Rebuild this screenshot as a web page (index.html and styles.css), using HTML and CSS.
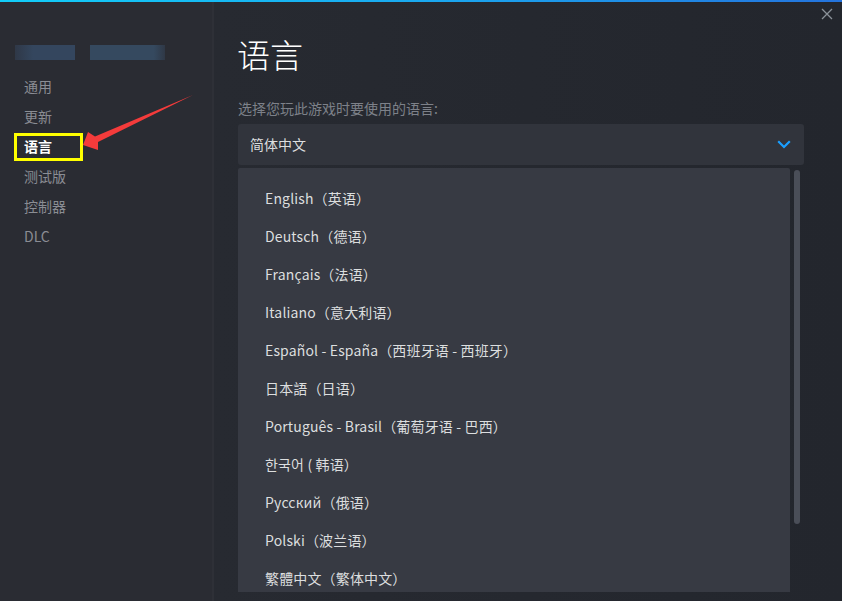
FILE: index.html
```html
<!DOCTYPE html>
<html lang="zh-CN">
<head>
<meta charset="utf-8">
<title>语言</title>
<link rel="stylesheet" href="styles.css">
</head>
<body>
<div class="topline"></div>
<div class="app">
  <aside class="sidebar">
    <div class="blurred">
      <span class="blur-a"></span>
      <span class="blur-b"></span>
    </div>
    <nav class="nav">
      <div class="nav-item">通用</div>
      <div class="nav-item">更新</div>
      <div class="nav-item active">语言</div>
      <div class="nav-item">测试版</div>
      <div class="nav-item">控制器</div>
      <div class="nav-item">DLC</div>
    </nav>
  </aside>
  <main class="main">
    <h1 class="title">语言</h1>
    <p class="subtitle">选择您玩此游戏时要使用的语言:</p>
    <div class="select">
      <span class="select-value">简体中文</span>
      <svg class="chevron" width="14" height="9" viewBox="0 0 14 9"><path d="M1.2 1.2 L7 7 L12.8 1.2" fill="none" stroke="#1a9fff" stroke-width="2.2"/></svg>
    </div>
    <div class="dropdown">
      <ul class="options">
        <li>English（英语）</li>
        <li>Deutsch（德语）</li>
        <li>Français（法语）</li>
        <li>Italiano（意大利语）</li>
        <li>Español - España（西班牙语 - 西班牙）</li>
        <li>日本語（日语）</li>
        <li>Português - Brasil（葡萄牙语 - 巴西）</li>
        <li>한국어 ( 韩语）</li>
        <li>Русский（俄语）</li>
        <li>Polski（波兰语）</li>
        <li>繁體中文（繁体中文）</li>
      </ul>
      <div class="scrollbar"></div>
    </div>
    <svg class="close" width="12" height="12" viewBox="0 0 12 12"><path d="M1 1 L11 11 M11 1 L1 11" stroke="#8b9299" stroke-width="1.3"/></svg>
  </main>
  <div class="highlight"></div>
  <svg class="arrow" width="842" height="601" viewBox="0 0 842 601">
    <polygon points="83,145 88,132 95,136.5 193,95 98,142 98,150" fill="#f43b3b"/>
  </svg>
</div>
</body>
</html>
```
FILE: styles.css
```css
html, body {
  margin: 0;
  padding: 0;
  background: #25282f;
  width: 842px;
  height: 601px;
  overflow: hidden;
  font-family: "Noto Sans CJK SC", "Noto Sans", sans-serif;
}
.topline {
  height: 2px;
  background: linear-gradient(90deg, #12cdf8 0%, #1aa9f0 50%, #2473dd 100%);
}
.app {
  position: relative;
  display: flex;
  height: 599px;
}
.sidebar {
  width: 212px;
  flex: none;
  background: #2a2c33;
  border-right: 2px solid #2e3037;
}
.blurred {
  display: flex;
  gap: 15px;
  margin: 43px 0 0 15px;
  height: 15px;
  filter: blur(0.6px);
}
.blur-a {
  width: 60px;
  background: linear-gradient(90deg, #2f3847 0%, #34465e 30%, #34465e 100%);
}
.blur-b {
  width: 75px;
  background: linear-gradient(90deg, #35495f 0%, #35495f 85%, #2f3846 100%);
}
.nav {
  margin-top: 11px;
}
.nav-item {
  height: 30px;
  line-height: 30px;
  padding-left: 24px;
  font-size: 14px;
  color: #8a8d94;
}
.nav-item.active {
  color: #ffffff;
  font-weight: 700;
}
.main {
  position: relative;
  flex: 1;
  padding: 0 38px 0 24px;
  background: linear-gradient(90deg, #272a31 0%, #23262d 100%);
}
.title {
  margin: 32px 0 0 -1px;
  font-size: 33px;
  line-height: 40px;
  font-weight: 300;
  color: #ffffff;
}
.subtitle {
  margin: 24px 0 0;
  font-size: 14px;
  line-height: 20px;
  color: #7d8189;
}
.select {
  margin-top: 6px;
  height: 41px;
  background: #31343c;
  border-radius: 3px;
  display: flex;
  align-items: center;
  justify-content: space-between;
  padding: 0 13px 2px 12px;
  box-sizing: border-box;
}
.select-value {
  font-size: 14px;
  color: #dcdedf;
}
.chevron {
  display: block;
  margin-top: 2px;
}
.dropdown {
  margin-top: 3px;
  display: flex;
  gap: 4px;
  align-items: flex-start;
}
.options {
  list-style: none;
  margin: 0;
  padding: 11px 0 0 27px;
  width: 525px;
  height: 413px;
  overflow: hidden;
  background: #373a43;
  border-radius: 2px 2px 0 0;
}
.options li {
  height: 38px;
  line-height: 38px;
  font-size: 14px;
  letter-spacing: 0.15px;
  color: #dcdedf;
  white-space: nowrap;
}
.scrollbar {
  width: 6px;
  height: 354px;
  margin-top: 2px;
  background: #4a4e58;
  border-radius: 3px;
}
.close {
  position: absolute;
  top: 6px;
  right: 9px;
}
.highlight {
  position: absolute;
  left: 14px;
  top: 131px;
  width: 63px;
  height: 22px;
  border: 3px solid #ffff00;
}
.arrow {
  position: absolute;
  left: 0;
  top: -2px;
  pointer-events: none;
}
```
